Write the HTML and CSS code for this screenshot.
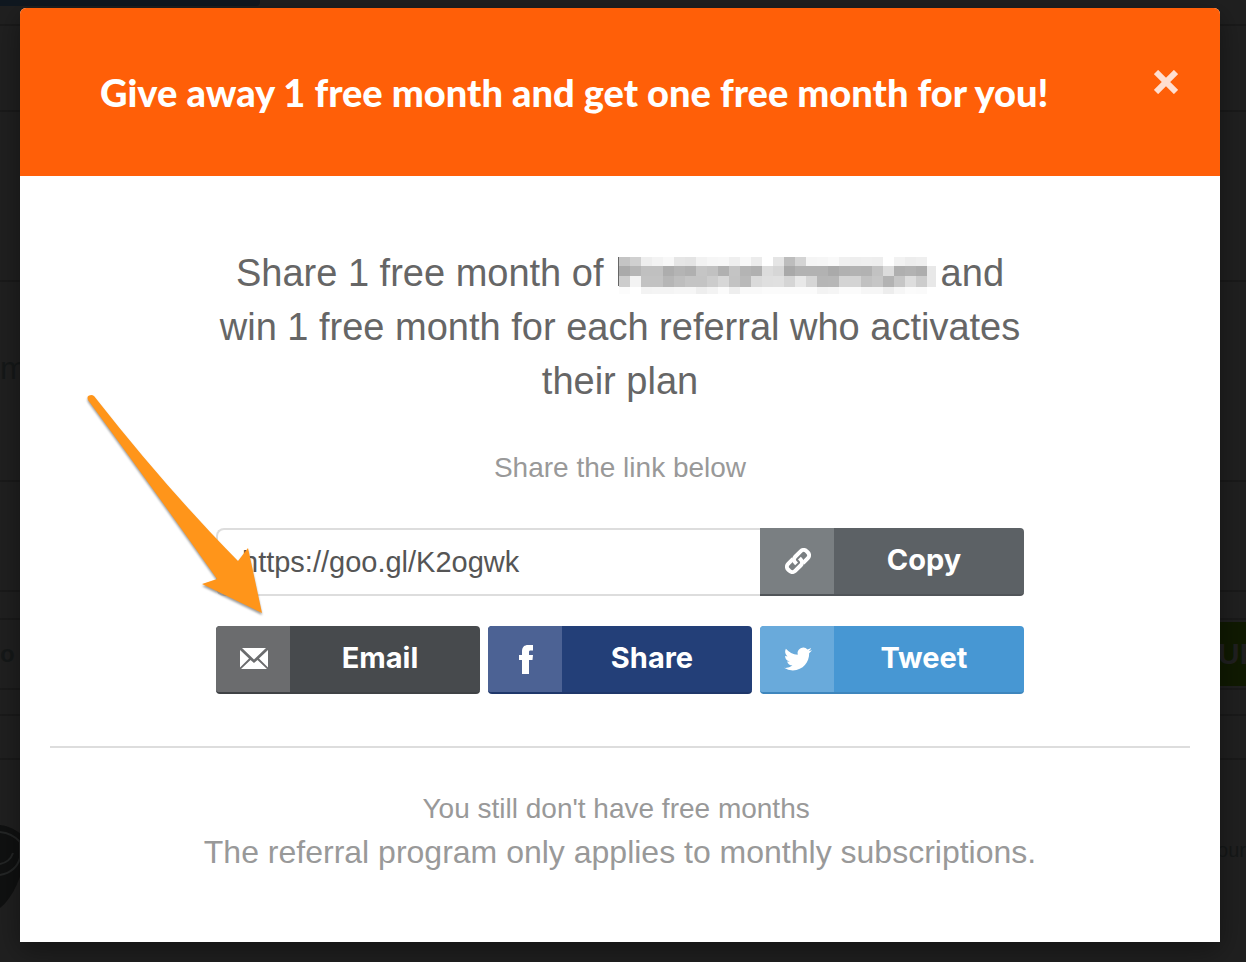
FILE: index.html
```html
<!DOCTYPE html>
<html lang="en">
<head>
    <meta charset="UTF-8">
    <meta name="viewport" content="width=device-width, initial-scale=1.0">
    <title>Referral program</title>
    <link rel="stylesheet" href="styles.css">
</head>
<body>
    <!-- Dimmed page -->
    <div class="page" aria-hidden="true">
        <div class="page-nav"></div>
        <div class="page-row row-tools"></div>
        <div class="page-row row-banner"></div>
        <div class="page-row row-intro"></div>
        <div class="page-row row-plan">m</div>
        <div class="page-row row-list"></div>
        <div class="page-row row-gap"></div>
        <div class="page-row row-search"><span>o</span><span class="page-cta">UP</span></div>
        <div class="page-row row-thin"></div>
        <div class="page-row row-tabs"></div>
        <div class="page-foot">
            <svg width="24" height="96" viewBox="0 0 24 96">
                <path d="M0 5C9 6 17 10 24 17V44C18 66 10 80 0 88Z" fill="#101111"/>
                <path d="M0 12Q12 13 20 22V38Q16 52 0 55M0 44Q10 42 13 33" fill="none" stroke="#242626" stroke-width="2"/>
            </svg>
            <span>your</span>
        </div>
    </div>

    <div class="overlay">
        <div class="modal" role="dialog" aria-labelledby="modal-title">
            <div class="modal-header">
                <h2 id="modal-title">Give away 1 free month and get one free month for you!</h2>
                <button class="close-btn" aria-label="Close">
                    <svg width="24" height="24" viewBox="0 0 24 24">
                        <path d="M2 2L22 22M22 2L2 22" stroke="#ffded0" stroke-width="6"/>
                    </svg>
                </button>
            </div>

            <div class="modal-body">
                <p class="lead">Share 1 free month of <svg id="plan-name" class="plan-name" width="318" height="37" viewBox="0 0 318 37" shape-rendering="crispEdges"></svg> and<br>win 1 free month for each referral who activates<br>their plan</p>
                <label class="hint" for="share-link">Share the link below</label>

                <div class="share-box">
                    <div class="link-row">
                        <input type="text" id="share-link" value="https://goo.gl/K2ogwk" readonly>
                        <button class="share-btn copy-btn" id="copy-btn">
                            <span class="icon">
                                <svg width="26" height="26" viewBox="0 0 26 26">
                                    <g transform="rotate(-45 13 13)" fill="none" stroke="#fff" stroke-width="4">
                                        <path d="M11 8H4A4 4 0 0 0 0 12V14A4 4 0 0 0 4 18H12A4 4 0 0 0 16 14V12"/>
                                        <path d="M15 18H22A4 4 0 0 0 26 14V12A4 4 0 0 0 22 8H14A4 4 0 0 0 10 12V14"/>
                                    </g>
                                </svg>
                            </span>
                            <span class="text">Copy</span>
                        </button>
                    </div>
                    <div class="btn-row">
                        <button class="share-btn email-btn">
                            <span class="icon">
                                <svg width="28" height="22" viewBox="0 0 28 22">
                                    <path d="M2 0H26L14 11.500ZM0 2L9 10.500L0 19.500ZM28 2V19.500L19 10.500ZM10.500 12L14 15L17.500 12L27 21H1Z" fill="#fff"/>
                                </svg>
                            </span>
                            <span class="text">Email</span>
                        </button>
                        <button class="share-btn facebook-btn">
                            <span class="icon">
                                <svg width="16" height="30" viewBox="0 0 16 30">
                                    <path d="M4 30V16H1V11H4V7.500C4 3 6.500 1 10 1H15V6.500H12.500C11.500 6.500 11 7 11 8V11H15L14.500 16H11V30Z" fill="#fff"/>
                                </svg>
                            </span>
                            <span class="text">Share</span>
                        </button>
                        <button class="share-btn twitter-btn">
                            <span class="icon">
                                <svg width="28" height="28" viewBox="0 0 24 24">
                                    <path d="M23.950 4.570a10 10 0 0 1-2.820.770 4.960 4.960 0 0 0 2.160-2.720c-.950.550-2 .960-3.130 1.180a4.920 4.920 0 0 0-8.380 4.480C7.690 8.100 4.070 6.130 1.640 3.160a4.820 4.820 0 0 0-.670 2.480c0 1.710.870 3.210 2.190 4.100a4.900 4.900 0 0 1-2.230-.620v.060a4.920 4.920 0 0 0 3.950 4.830 5 5 0 0 1-2.210.080 4.940 4.940 0 0 0 4.600 3.420A9.870 9.870 0 0 1 0 19.540a13.990 13.990 0 0 0 7.550 2.210c9.050 0 14-7.500 14-13.980 0-.210 0-.420-.020-.630a9.940 9.940 0 0 0 2.460-2.550z" fill="#fff"/>
                                </svg>
                            </span>
                            <span class="text">Tweet</span>
                        </button>
                    </div>
                </div>

                <hr>
                <p class="months">You still don't have free months&nbsp;</p>
                <p class="note">The referral program only applies to monthly subscriptions.</p>
            </div>

            <svg class="pointer" width="190" height="230" viewBox="0 0 190 230" aria-hidden="true">
                <path d="M8 10Q6 5 12 5L14 6Q86 98 158 171L168 158L182 223L122 194L137 189Q77 104 8 10Z" fill="#ff951a"/>
            </svg>
        </div>
    </div>

    <script>
        // Grey levels of the masked plan name, one string per row of tiles
        const tiles = [
            'c4d0eef3f8e6e4f2f6f7eff8ecffe5bdd4f5f6f9f0eeefeefff2edefff',
            'aab5c0c0adb4b0c5c1b0c4b4b0dcd6a9b2b2b2aab1b3b2c2dcafb2ade8',
            'cdf3c2c2b6bec4c4ccd7c3b9dadfe0d5e8d6b6b7d4d4c1c6b3c6ddcce8',
            'fcfff3f4f4f6f6eef3fbeef9f9fbfbfbfbfbf3f5fbfbf6f6edf6fbfaff'
        ];
        const tops = [0, 9, 19, 30, 37];

        function drawPlanName() {
            let rects = '<rect width="1" height="29" fill="#666"/>';
            tiles.forEach((row, y) => {
                row.match(/../g).forEach((grey, x) => {
                    const width = x === 28 ? 9 : 11;
                    rects += `<rect x="${x * 11 + 1}" y="${tops[y]}" width="${width}" height="${tops[y + 1] - tops[y]}" fill="#${grey.repeat(3)}"/>`;
                });
            });
            document.getElementById('plan-name').innerHTML = rects;
        }

        document.getElementById('copy-btn').addEventListener('click', () => {
            const link = document.getElementById('share-link');
            link.select();
            navigator.clipboard.writeText(link.value);
        });

        drawPlanName();
    </script>
</body>
</html>
```
FILE: styles.css
```css
* {
    margin: 0;
    padding: 0;
    box-sizing: border-box;
}

body {
    min-height: 100vh;
    background: #202020;
    font-family: "Liberation Sans", Arial, sans-serif;
    overflow: hidden;
}

/* Dimmed page */
.page {
    color: #151818;
    font-size: 32px;
}

.page-nav {
    width: 260px;
    height: 6px;
    background: #101820;
    border-radius: 0 0 4px 0;
}

.page-row {
    border-bottom: 2px solid #1a1a1a;
}

.row-tools { height: 20px; }
.row-banner { height: 86px; }
.row-intro { height: 170px; }

.row-plan {
    height: 200px;
    padding-top: 68px;
}

.row-list { height: 110px; }
.row-gap { height: 28px; }

.row-search {
    display: flex;
    justify-content: space-between;
    align-items: center;
    height: 70px;
    font-weight: bold;
    font-size: 24px;
}

.page-cta {
    width: 40px;
    padding-left: 12px;
    background: #101a02;
    color: #202020;
    font-size: 30px;
    line-height: 64px;
    overflow: hidden;
}

.row-thin { height: 26px; }
.row-tabs { height: 44px; }

.page-foot {
    display: flex;
    justify-content: space-between;
    padding-top: 60px;
    font-size: 20px;
    line-height: 60px;
}

/* Modal */
.overlay {
    position: absolute;
    inset: 0;
    padding: 8px 26px 20px 20px;
}

.modal {
    position: relative;
    background: #fff;
    border-radius: 6px 6px 0 0;
    box-shadow: 0 8px 28px rgba(0, 0, 0, 0.4);
}

.modal-header {
    display: flex;
    justify-content: space-between;
    align-items: center;
    height: 168px;
    padding: 0 40px 0 80px;
    background: #ff5f08;
    border-radius: 6px 6px 0 0;
}

h2 {
    color: #fff;
    font-family: Lato, sans-serif;
    font-size: 38px;
    font-weight: 900;
    white-space: nowrap;
}

.close-btn {
    display: flex;
    margin-bottom: 20px;
    padding: 2px;
    background: none;
    border: none;
    cursor: pointer;
}

.modal-body {
    padding: 70px 30px 68px;
    text-align: center;
}

.lead {
    color: #666;
    font-size: 38px;
    line-height: 54px;
    white-space: nowrap;
}

.plan-name {
    margin: 0 -6px 0 4px;
    vertical-align: -8px;
}

.hint {
    display: block;
    margin-top: 40px;
    color: #999;
    font-size: 28px;
    line-height: 40px;
}

.share-box {
    max-width: 808px;
    margin: 40px auto 52px;
}

.link-row {
    display: flex;
    margin-bottom: 30px;
}

input {
    flex: 1;
    min-width: 0;
    padding: 0 24px;
    border: 2px solid #ddd;
    border-right: none;
    border-radius: 8px 0 0 8px;
    background: #fff;
    color: #555;
    font-family: inherit;
    font-size: 29px;
    outline: none;
}

.btn-row {
    display: grid;
    grid-template-columns: repeat(3, 1fr);
    gap: 8px;
}

.share-btn {
    display: flex;
    height: 68px;
    border: none;
    border-bottom: 2px solid;
    border-radius: 4px;
    color: #fff;
    font-family: Inter, sans-serif;
    font-size: 29px;
    font-weight: 700;
    line-height: 64px;
    overflow: hidden;
    cursor: pointer;
}

.icon {
    display: flex;
    justify-content: center;
    align-items: center;
    width: 74px;
    height: 66px;
    padding-left: 2px;
}

.text {
    flex: 1;
    padding-right: 10px;
}

.copy-btn {
    width: 264px;
    border-radius: 0 4px 4px 0;
    background: #5c6165;
    border-color: #515559;
}

.copy-btn .icon {
    background: #7a7f82;
}

.email-btn {
    background: #474a4d;
    border-color: #3f4245;
}

.email-btn .icon {
    background: #6b6c6e;
}

.facebook-btn {
    background: #233f78;
    border-color: #1f376a;
}

.facebook-btn .icon {
    background: #4c6294;
}

.twitter-btn {
    background: #4797d3;
    border-color: #3e86bd;
}

.twitter-btn .icon {
    background: #69aadb;
}

hr {
    border: none;
    border-top: 2px solid #ddd;
}

.months {
    margin-top: 40px;
    color: #999;
    font-size: 28px;
    line-height: 42px;
}

.note {
    color: #999;
    font-size: 32px;
    line-height: 44px;
}

/* Arrow towards the email button */
.pointer {
    position: absolute;
    left: 60px;
    top: 382px;
    filter: drop-shadow(0 2px 1px rgba(0, 0, 0, 0.4));
    pointer-events: none;
}
```
